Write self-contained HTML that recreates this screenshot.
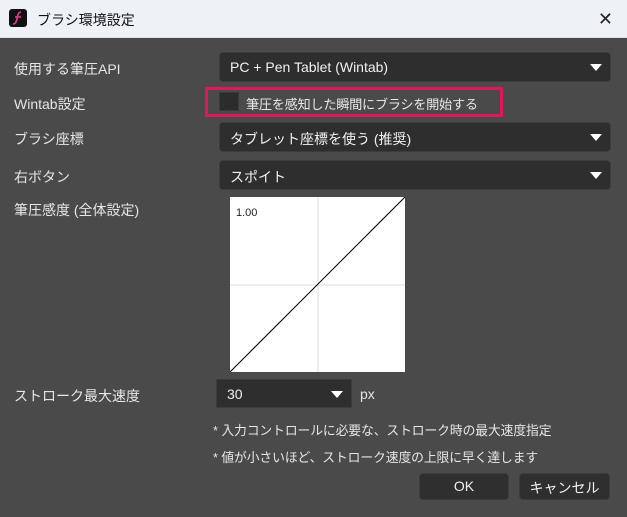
<!DOCTYPE html>
<html><head><meta charset="utf-8"><style>
*{margin:0;padding:0;box-sizing:border-box}
body{width:627px;height:517px;background:#4a4a4a;font-family:"Liberation Sans","Noto Sans CJK JP",sans-serif;position:relative;overflow:hidden;color:#e6e6e6;font-size:14px}
.title{position:absolute;left:0;top:0;width:627px;height:38px;background:#eef2f7;color:#111;border-bottom:1px solid #ddd}
.title .t{position:absolute;left:37px;top:10px;font-size:14px}
.icon{position:absolute;left:9px;top:9px;width:18px;height:18px;background:#111;border-radius:3px}
.x{position:absolute;right:14px;top:9px;font-size:18px;color:#222}
.lbl{position:absolute;left:14px;font-size:14px}
.dd{position:absolute;left:219px;width:392px;height:30px;background:#2e2e2e;border:1px solid #3c3c3c;border-radius:4px;padding:6px 0 0 10px;font-size:14px;color:#f0f0f0}
.arr{position:absolute;right:8px;top:11px;width:0;height:0;border-left:6px solid transparent;border-right:6px solid transparent;border-top:7px solid #fff}
.btn{position:absolute;top:473px;height:27px;background:#2f2f2f;border:1px solid #3c3c3c;border-radius:4px;text-align:center;padding-top:4px;font-size:14px;color:#f0f0f0}
.note{position:absolute;left:213px;font-size:12.8px;letter-spacing:-0.1px}
</style></head><body>
<div class="title"><div class="icon"><svg width="18" height="18"><path d="M12 3C9 3 9 6 8 10S6 15 4 15M6 8h6" stroke="#e43a8c" stroke-width="1.6" fill="none"/></svg></div><div class="t">ブラシ環境設定</div><div class="x">✕</div></div>
<div class="lbl" style="top:59px">使用する筆圧API</div>
<div class="dd" style="top:52px">PC + Pen Tablet (Wintab)<div class="arr"></div></div>
<div class="lbl" style="top:94px">Wintab設定</div>
<div style="position:absolute;left:205px;top:87px;width:298px;height:30px;border:3px solid #e0185a"></div>
<div style="position:absolute;left:219px;top:92px;width:20px;height:19px;background:#2c2c2c;border:1px solid #3a3a3a"></div>
<div style="position:absolute;left:246px;top:94px;font-size:13.2px;letter-spacing:-0.3px">筆圧を感知した瞬間にブラシを開始する</div>
<div class="lbl" style="top:129px">ブラシ座標</div>
<div class="dd" style="top:122px">タブレット座標を使う (推奨)<div class="arr"></div></div>
<div class="lbl" style="top:167px">右ボタン</div>
<div class="dd" style="top:160px">スポイト<div class="arr"></div></div>
<div class="lbl" style="top:200px">筆圧感度 (全体設定)</div>
<svg style="position:absolute;left:230px;top:197px" width="175" height="175"><rect width="175" height="175" fill="#fff"/><line x1="88" y1="0" x2="88" y2="175" stroke="#ddd"/><line x1="0" y1="88" x2="175" y2="88" stroke="#ddd"/><line x1="0" y1="175" x2="175" y2="0" stroke="#000" stroke-width="1"/><text x="6" y="19" font-size="11" font-family="Liberation Sans" fill="#222">1.00</text></svg>
<div class="lbl" style="top:386px">ストローク最大速度</div>
<div class="dd" style="top:379px;left:216px;width:136px;height:29px;border-radius:0">30<div class="arr"></div></div>
<div style="position:absolute;left:360px;top:386px">px</div>
<div class="note" style="top:420px">* 入力コントロールに必要な、ストローク時の最大速度指定</div>
<div class="note" style="top:447px">* 値が小さいほど、ストローク速度の上限に早く達します</div>
<div class="btn" style="left:419px;width:90px">OK</div>
<div class="btn" style="left:519px;width:91px">キャンセル</div>
</body></html>
